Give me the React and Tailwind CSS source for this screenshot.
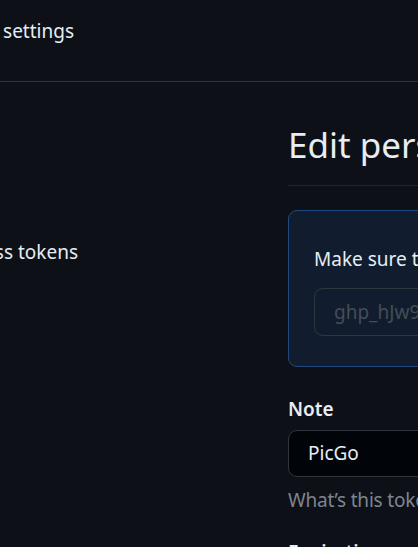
import React from "react";

const TokenPage = () => {
    return (
        <div
            className="w-[418px] h-[547px] overflow-hidden bg-[#0d1117] text-[#e6edf3]"
            style={{ fontFamily: '"Noto Sans", "Open Sans", sans-serif' }}
        >
            {/* Top header */}
            <header className="h-[82px] border-b border-[#30363d] flex items-start">
                <div className="w-[74px] mt-[16px] flex justify-end overflow-hidden whitespace-nowrap text-[19px] leading-[30px]">
                    Developer settings
                </div>
            </header>

            <div className="flex">
                {/* Sidebar */}
                <aside className="w-[288px] shrink-0 pt-[155px]">
                    <div className="w-[78px] flex justify-end overflow-hidden whitespace-nowrap text-[19px] leading-[30px]">
                        Personal access tokens
                    </div>
                </aside>

                {/* Main */}
                <main className="w-[760px] shrink-0 pt-[40px]">
                    <h2 className="text-[35px] leading-[46px] font-normal pb-[17px] border-b border-[#21262d] whitespace-nowrap">
                        Edit personal access token (classic)
                    </h2>

                    <div className="mt-[24px] h-[157px] rounded-[9px] border border-[#1f4a80] bg-[#111d2e] px-[25px] pt-[33px]">
                        <p className="text-[19px] leading-[30px] whitespace-nowrap">
                            Make sure to copy your personal access token now. You won’t be able to see it again!
                        </p>
                        <div className="mt-[14px] h-[48px] w-[560px] rounded-[9px] border border-[#30363d] flex items-center px-[19px] text-[19px] text-[#454c56] whitespace-nowrap">
                            ghp_hJw9xxxxxxxxxxxxxxxxxxxxxxxxxxxxx
                        </div>
                    </div>

                    <div className="mt-[27px]">
                        <label className="block text-[19px] leading-[30px] font-semibold">Note</label>
                        <div className="mt-[6px] h-[47px] w-[560px] rounded-[9px] border border-[#30363d] bg-[#010409] flex items-center px-[19px] text-[19px]">
                            PicGo
                        </div>
                        <p className="mt-[8px] text-[19px] leading-[30px] text-[#7d8590] whitespace-nowrap tracking-[-0.2px]">
                            What’s this token for?
                        </p>
                    </div>

                    <div className="mt-[22px]">
                        <label className="block text-[19px] leading-[30px] font-semibold">Expiration</label>
                    </div>
                </main>
            </div>
        </div>
    );
};

export default function App() {
    return <TokenPage />;
}
